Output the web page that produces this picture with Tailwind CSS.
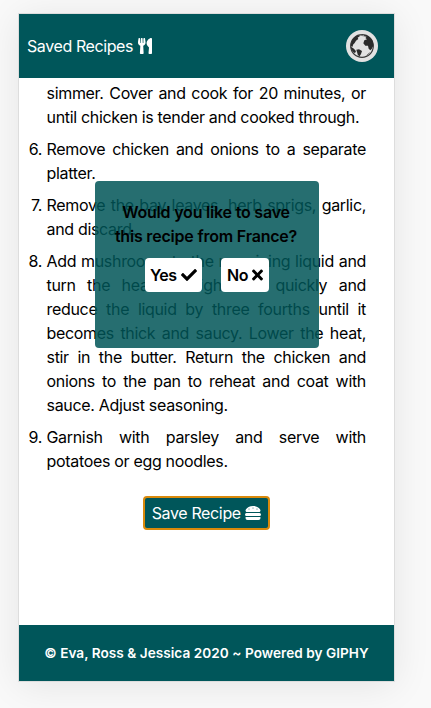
<!DOCTYPE html>
<html lang="en">
<head>
<meta charset="utf-8">
<title>Saved Recipes</title>
<script src="https://cdn.jsdelivr.net/npm/@tailwindcss/browser@4"></script>
</head>
<body class="bg-[#f9f9f9] h-[708px] overflow-hidden font-['Inter',sans-serif] text-base text-black">
<main class="relative mt-[14px] ml-[19px] w-[375px] h-[667px] flex flex-col bg-white shadow-[0_0_0_1px_#dddddd,0_4px_36px_rgba(0,0,0,0.09)]">
  <header class="h-16 shrink-0 bg-[#00565a] text-white flex items-center justify-between pl-2 pr-4">
    <div class="flex items-center gap-[4.5px] tracking-[-0.4px]">Saved Recipes
      <svg class="w-[14px] h-4" viewBox="0 0 416 512" preserveAspectRatio="none" fill="currentColor"><path d="M207.9 15.2c.8 4.7 16.1 94.5 16.1 128.8 0 52.3-27.8 89.6-68.9 104.6L168 486.7c.7 13.7-10.2 25.3-24 25.3H80c-13.7 0-24.7-11.5-24-25.3l12.9-238.1C27.7 233.6 0 196.2 0 144 0 109.6 15.3 19.9 16.1 15.2 19.3-5.1 61.4-5.4 64 16.3v141.2c1.3 3.4 15.1 3.2 16 0 1.4-25.3 7.9-139.2 8-141.8 3.3-20.8 44.7-20.8 47.9 0 .2 2.7 6.6 116.5 8 141.8.9 3.2 14.8 3.4 16 0V16.3c2.6-21.6 44.8-21.4 48-1.1zm119.2 285.7l-15 185.1c-1.2 14 9.9 26 23.9 26h56c13.3 0 24-10.7 24-24V24c0-13.2-10.7-24-24-24-82.5 0-221.4 178.5-64.9 300.9z"/></svg>
    </div>
    <svg class="w-8 h-8" viewBox="0 0 96 96">
      <circle cx="48" cy="48" r="48" fill="#e2e2e2"/>
      <circle cx="48" cy="48" r="34" fill="#e2e2e2" stroke="#3a3a3a" stroke-width="3.5"/>
      <path fill="#2b2b2b" d="M15 42c2-12 10-22 21-26l7 1-8 6 2 4-7 5-4 7-5 5-1 6-5-1z"/>
      <path fill="#2b2b2b" d="M14 50l8 5 6 6 2 5-5 3c-6-5-10-12-11-19z"/>
      <path fill="#2b2b2b" d="M55 15c10 1 20 8 25 18l2 14-5 10-4 4-5-5-2-9-8 0-6-7 3-9 8-3-5-4 4-4-8-1z"/>
      <path fill="#2b2b2b" d="M31 59l8-1 9 5-3 9-5 8-5-7z"/>
      <path fill="none" stroke="#777" stroke-width="3" d="M62 76l9-8M44 15l9 3"/>
    </svg>
  </header>

  <section class="h-[547px] shrink-0 pt-[3px] pl-[27.5px] pr-[28px]">
    <ol class="flex flex-col gap-2 leading-6 tracking-[-0.32px] text-justify [text-align-last:justify]">
      <li>
        <p>simmer. Cover and cook for 20 minutes, or</p>
        <p class="[text-align-last:left]">until chicken is tender and cooked through.</p>
      </li>
      <li class="relative">
        <span class="absolute right-full mr-[4.5px]">6.</span>
        <p>Remove chicken and onions to a separate</p>
        <p class="[text-align-last:left]">platter.</p>
      </li>
      <li class="relative">
        <span class="absolute right-full mr-[4.5px]">7.</span>
        <p>Remove the bay leaves, herb sprigs, garlic,</p>
        <p class="[text-align-last:left]">and discard.</p>
      </li>
      <li class="relative">
        <span class="absolute right-full mr-[4.5px]">8.</span>
        <p>Add mushrooms to the remaining liquid and</p>
        <p>turn the heat to high. Boil quickly and</p>
        <p>reduce the liquid by three fourths until it</p>
        <p>becomes thick and saucy. Lower the heat,</p>
        <p>stir in the butter. Return the chicken and</p>
        <p>onions to the pan to reheat and coat with</p>
        <p class="[text-align-last:left]">sauce. Adjust seasoning.</p>
      </li>
      <li class="relative">
        <span class="absolute right-full mr-[4.5px]">9.</span>
        <p>Garnish with parsley and serve with</p>
        <p class="[text-align-last:left]">potatoes or egg noodles.</p>
      </li>
    </ol>
    <div class="flex justify-center mt-[23px]">
      <button class="h-[34px] w-[127px] flex items-center justify-center gap-[4px] rounded-[4px] border-2 border-[#d9890b] bg-[#00565a] text-white tracking-[-0.36px] whitespace-nowrap">Save Recipe
        <svg class="size-4 shrink-0" viewBox="0 0 512 512" fill="currentColor"><path d="M464 256H48a48 48 0 0 0 0 96h416a48 48 0 0 0 0-96zm16 128H32a16 16 0 0 0-16 16v16a64 64 0 0 0 64 64h352a64 64 0 0 0 64-64v-16a16 16 0 0 0-16-16zM58.64 224h394.72c34.57 0 54.62-43.9 34.82-75.88C448 83.2 359.55 32.1 256 32c-103.54.1-192 51.2-232.18 116.11C4 180.09 24.07 224 58.64 224zM384 112a16 16 0 1 1-16 16 16 16 0 0 1 16-16zM256 80a16 16 0 1 1-16 16 16 16 0 0 1 16-16zm-128 32a16 16 0 1 1-16 16 16 16 0 0 1 16-16z"/></svg>
      </button>
    </div>
  </section>

  <footer class="h-14 shrink-0 bg-[#00565a] text-white flex items-center justify-center text-[13.6px] font-semibold tracking-[0.04px] whitespace-nowrap">© Eva, Ross &amp; Jessica 2020 ~ Powered by GIPHY</footer>

  <div class="absolute left-[76px] top-[167px] w-[224px] h-[167px] rounded-[4px] bg-[#005557]/85 pt-[19px] text-center font-semibold tracking-[-0.2px] leading-6">
    <p class="relative -left-px">Would you like to save</p>
    <p class="relative -left-px">this recipe from France?</p>
    <div class="flex gap-[19px] mt-[10px] pl-[49.5px]">
      <button class="h-[34px] w-[57.5px] flex items-center justify-center gap-1 rounded-[4px] bg-white tracking-[-0.5px]">Yes
        <svg class="size-4 shrink-0" viewBox="0 0 512 512"><path d="M173.898 439.404l-166.4-166.4c-9.997-9.997-9.997-26.206 0-36.204l36.203-36.204c9.997-9.998 26.207-9.998 36.204 0L192 312.69 432.095 72.596c9.997-9.997 26.207-9.997 36.204 0l36.203 36.204c9.997 9.997 9.997 26.206 0 36.204l-294.4 294.401c-9.998 9.997-26.207 9.997-36.204-.001z"/></svg>
      </button>
      <button class="h-[34px] w-[48px] flex items-center justify-center gap-1 rounded-[4px] bg-white tracking-[-0.5px]">No
        <svg class="w-[11px] h-4 shrink-0" viewBox="0 0 352 512"><path d="M242.72 256l100.07-100.07c12.28-12.28 12.28-32.19 0-44.48l-22.24-22.24c-12.28-12.28-32.19-12.28-44.48 0L176 189.28 75.93 89.21c-12.28-12.28-32.19-12.28-44.48 0L9.21 111.45c-12.28 12.28-12.28 32.19 0 44.48L109.28 256 9.21 356.07c-12.28 12.28-12.28 32.19 0 44.48l22.24 22.24c12.28 12.28 32.2 12.28 44.48 0L176 322.72l100.07 100.07c12.28 12.28 32.2 12.28 44.48 0l22.24-22.24c12.28-12.28 12.28-32.19 0-44.48L242.72 256z"/></svg>
      </button>
    </div>
  </div>
</main>
</body>
</html>
